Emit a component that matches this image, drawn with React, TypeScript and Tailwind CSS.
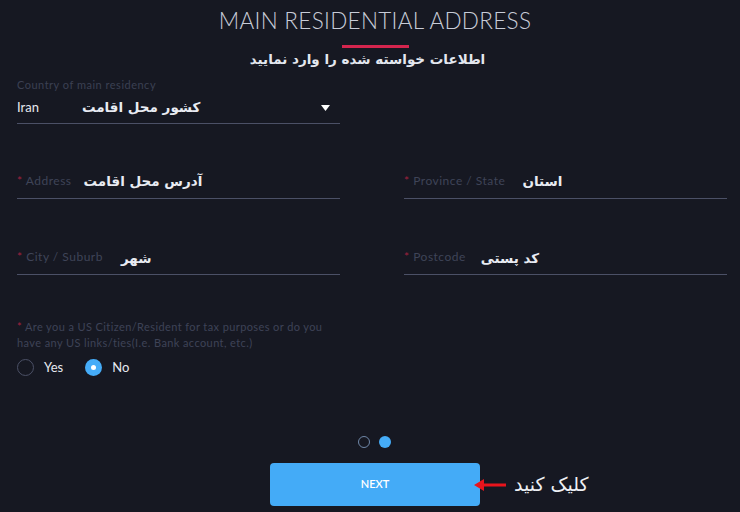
import React from 'react';

const fa = "font-['DejaVu_Sans',sans-serif]";

function Req() {
  return <span className="text-[#a0213f]">* </span>;
}

function Field({ label, value, gap, drop }: { label: string; value: string; gap: string; drop?: boolean }) {
  return (
    <div className="flex h-[30px] items-center border-b border-[#4b5066] pb-[6px]">
      <span className="whitespace-nowrap text-[12px] leading-none tracking-[0.5px] text-[#3f4458]">
        <Req />
        {label}
      </span>
      <span dir="rtl" className={`${fa} ${gap} ${drop ? 'mt-[5px]' : 'mt-[2px]'} text-[13.5px] font-bold leading-none text-[#e8ebf2]`}>
        {value}
      </span>
    </div>
  );
}

export default function App() {
  return (
    <div className="h-[512px] w-[740px] overflow-hidden bg-[#161822] font-['Lato',sans-serif] text-[#d0d4de]">
      <div className="flex flex-col items-center pt-[8px]">
        <h1 className="ml-[10px] text-[22.5px] font-light leading-[26px] tracking-[0.3px] text-[#c8ccd8]">MAIN RESIDENTIAL ADDRESS</h1>
        <div className="ml-[11px] mt-[11px] h-[3px] w-[67px] bg-[#d4254e]" />
        <p dir="rtl" className={`${fa} ml-[-5px] mt-[2px] text-[13.5px] font-bold leading-[18px] text-[#e3e7ef]`}>
          اطلاعات خواسته شده را وارد نمایید
        </p>
      </div>

      <div className="px-[17px] pt-[10px]">
        <div className="w-[323px]">
          <div className="text-[11px] leading-[14px] tracking-[0.5px] text-[#3b4053]">Country of main residency</div>
          <div className="flex h-[32px] items-center border-b border-[#4b5066]">
            <span className="text-[13px] text-[#e6e9f0]">Iran</span>
            <span dir="rtl" className={`${fa} ml-[43px] text-[13.5px] font-bold text-[#e8ebf2]`}>کشور محل اقامت</span>
            <svg className="ml-auto mr-[10px]" width="9" height="6" viewBox="0 0 9 6"><path d="M0 0h9L4.5 6z" fill="#fff" /></svg>
          </div>
        </div>

        <div className="mt-[45px] grid grid-cols-[323px_323px] gap-x-[64px]">
          <Field label="Address" value="آدرس محل اقامت" gap="ml-[12px]" />
          <Field label="Province / State" value="استان" gap="ml-[17px]" />
        </div>

        <div className="mt-[46px] grid grid-cols-[323px_323px] gap-x-[64px]">
          <Field label="City / Suburb" value="شهر" gap="ml-[18px]" drop />
          <Field label="Postcode" value="کد پستی" gap="ml-[15px]" drop />
        </div>

        <p className="mt-[44px] text-[11px] leading-[16px] tracking-[0.4px] text-[#3e4357]">
          <Req />
          Are you a US Citizen/Resident for tax purposes or do you
          <br />
          have any US links/ties(I.e. Bank account, etc.)
        </p>
        <div className="mt-[8px] flex h-[17px] items-center text-[13px] text-[#e6e9f0]">
          <span className="h-[17px] w-[17px] rounded-full border border-[#4b5066]" />
          <span className="ml-[10px]">Yes</span>
          <span className="ml-[22px] flex h-[17px] w-[17px] items-center justify-center rounded-full bg-[#45acf8]">
            <span className="h-[5px] w-[5px] rounded-full bg-white" />
          </span>
          <span className="ml-[10px]">No</span>
        </div>
      </div>

      <div className="mt-[60px] flex justify-center gap-[9px] pl-[9px]">
        <span className="h-[12px] w-[12px] rounded-full border border-[#6f87a8]" />
        <span className="h-[12px] w-[12px] rounded-full bg-[#45acf8]" />
      </div>

      <div className="mt-[15px] flex items-center pl-[270px]">
        <button className="flex h-[43px] w-[210px] items-center justify-center rounded-[4px] bg-[#44abf7] text-[11px] font-semibold text-white">
          NEXT
        </button>
        <svg className="ml-[-6px]" width="32" height="12" viewBox="0 0 32 12">
          <path d="M0 6L10 0v4.5h22v3H10V12z" fill="#e8141c" />
        </svg>
        <span dir="rtl" className={`${fa} ml-[8px] text-[19px] text-[#eef0f4]`}>کلیک کنید</span>
      </div>
    </div>
  );
}
